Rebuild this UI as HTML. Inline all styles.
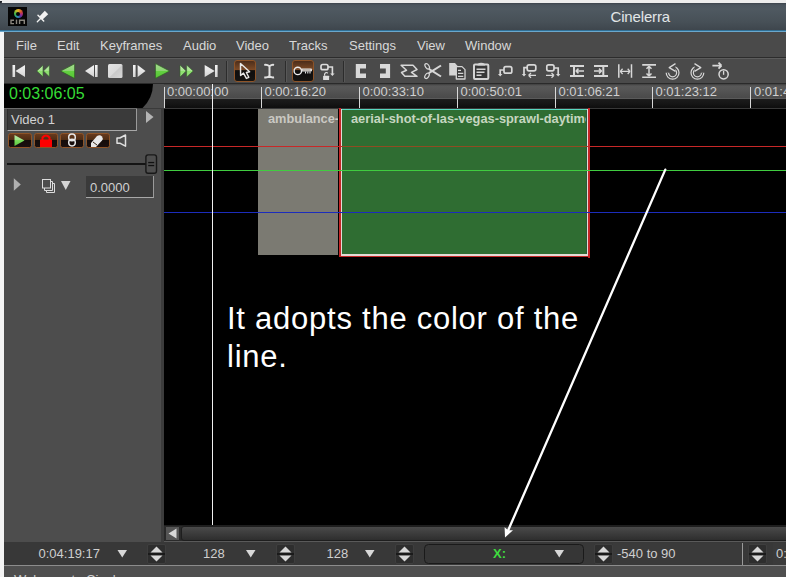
<!DOCTYPE html>
<html><head><meta charset="utf-8">
<style>
*{margin:0;padding:0;box-sizing:border-box}
html,body{width:786px;height:577px;overflow:hidden;background:#4b4b4b;font-family:"Liberation Sans",sans-serif;position:relative}
.a{position:absolute}
.t{position:absolute;white-space:nowrap;line-height:1}
svg{position:absolute;overflow:visible}
</style></head><body>

<!-- top strip & title bar -->
<div class="a" style="left:0;top:0;width:786px;height:3px;background:#ededed"></div>
<div class="a" style="left:0;top:1px;width:2px;height:3px;background:#20242a;border-radius:0 0 2px 0"></div>
<div class="a" style="left:0;top:3px;width:786px;height:27px;background:linear-gradient(#3c444c 0px,#4b555e 2px,#4f5961 6px,#475057 19px,#3e464d 27px)"></div>
<div class="a" style="left:0;top:30px;width:786px;height:1px;background:#2f6f95"></div>
<div class="a" style="left:0;top:31px;width:786px;height:1px;background:#6aa7cc"></div>
<div class="t" style="left:610.5px;top:9.3px;font-size:15px;color:#e2e6e8;letter-spacing:-0.15px">Cinelerra</div>
<!-- app icon -->
<div class="a" style="left:8px;top:7px;width:19px;height:19px;background:#060606"></div>
<div class="a" style="left:13.7px;top:9.2px;width:9px;height:9px;border-radius:50%;background:conic-gradient(from 0deg,#e0a828,#d04a30 60deg,#a02888 110deg,#4a36a8 150deg,#2898b0 200deg,#38b048 260deg,#b8c028 320deg,#e0a828)"></div>
<div class="a" style="left:16.2px;top:11.7px;width:4px;height:4px;border-radius:50%;background:#060606"></div>
<svg style="left:8px;top:7px" width="19" height="19"><g stroke="#8a867e" stroke-width="1.4" fill="none"><path d="M6 13.2 L3 13.2 L3 16.6 L6 16.6"/><path d="M8.5 12.6 L8.5 17"/><path d="M11.6 17 L11.6 13.2 L16.3 13.2 L16.3 17"/></g></svg>
<!-- pin -->
<svg style="left:30px;top:5px" width="25" height="25"><path d="M14.8 5.8 L18.2 9.2 L12.6 14.6 L9.4 11.4Z" fill="#f2f2f2"/><path d="M8 10.3 L13.7 16" stroke="#f2f2f2" stroke-width="1.5" stroke-linecap="round"/><path d="M10.8 13.2 L7.3 16.7" stroke="#f2f2f2" stroke-width="1.3" stroke-linecap="round"/></svg>

<!-- left white strip -->
<div class="a" style="left:0;top:32px;width:4px;height:545px;background:#f4f4f4"></div>

<!-- menu bar -->
<div class="a" style="left:4px;top:32px;width:782px;height:25px;background:#4a4a4a"></div>
<div class="a" style="left:4px;top:57px;width:782px;height:1px;background:#2c2c2c"></div>
<div class="a" style="left:4px;top:58px;width:782px;height:1px;background:#5c5c5c"></div>
<div class="t" style="left:16px;top:38.5px;font-size:13px;color:#d8d8d8">File</div>
<div class="t" style="left:57px;top:38.5px;font-size:13px;color:#d8d8d8">Edit</div>
<div class="t" style="left:100px;top:38.5px;font-size:13px;color:#d8d8d8">Keyframes</div>
<div class="t" style="left:183px;top:38.5px;font-size:13px;color:#d8d8d8">Audio</div>
<div class="t" style="left:236px;top:38.5px;font-size:13px;color:#d8d8d8">Video</div>
<div class="t" style="left:289px;top:38.5px;font-size:13px;color:#d8d8d8">Tracks</div>
<div class="t" style="left:349px;top:38.5px;font-size:13px;color:#d8d8d8">Settings</div>
<div class="t" style="left:417px;top:38.5px;font-size:13px;color:#d8d8d8">View</div>
<div class="t" style="left:465px;top:38.5px;font-size:13px;color:#d8d8d8">Window</div>

<!-- toolbar -->
<div class="a" style="left:4px;top:59px;width:782px;height:24px;background:#4a4a4a"></div>
<div class="a" style="left:4px;top:83px;width:782px;height:1px;background:#2a2a2a"></div>
<svg style="left:0;top:0" width="786" height="84" viewBox="0 0 786 84">
<defs>
<linearGradient id="gw" x1="0" y1="0" x2="0" y2="1"><stop offset="0" stop-color="#f4f4f4"/><stop offset="1" stop-color="#d4d4d4"/></linearGradient>
<linearGradient id="gs" x1="0" y1="0" x2="1" y2="1"><stop offset="0" stop-color="#e4e4e4"/><stop offset="0.5" stop-color="#dadada"/><stop offset="0.55" stop-color="#cacaca"/><stop offset="1" stop-color="#d8d8d8"/></linearGradient>
<linearGradient id="gg" x1="0" y1="0" x2="0" y2="1"><stop offset="0" stop-color="#a4dc8e"/><stop offset="0.48" stop-color="#8cd472"/><stop offset="0.52" stop-color="#62d040"/><stop offset="1" stop-color="#58c436"/></linearGradient>
<linearGradient id="gl" x1="0" y1="0" x2="0" y2="1"><stop offset="0" stop-color="#bceaa8"/><stop offset="0.5" stop-color="#a8e490"/><stop offset="0.52" stop-color="#8ce06c"/><stop offset="1" stop-color="#9ae080"/></linearGradient>
<linearGradient id="gb" x1="0" y1="0" x2="0" y2="1"><stop offset="0" stop-color="#4a2c1a"/><stop offset="0.44" stop-color="#7c4a26"/><stop offset="0.47" stop-color="#1e1610"/><stop offset="0.53" stop-color="#0e0e0e"/><stop offset="1" stop-color="#161412"/></linearGradient>
</defs>
<g fill="url(#gw)">
<rect x="12.5" y="65" width="2.6" height="12"/><path d="M25 65 L15.5 71 L25 77Z"/>
<path d="M94 65 L85 71 L94 77Z"/><rect x="95" y="65" width="2.6" height="12"/>
<rect x="133" y="65" width="2.6" height="12"/><path d="M137.6 65 L145.5 71 L137.6 77Z"/>
<path d="M204.7 65 L214.7 71 L204.7 77Z"/><rect x="215" y="65" width="2.6" height="12"/>
</g>
<rect x="108" y="64" width="14.5" height="14" rx="1.5" fill="url(#gs)"/>
<g fill="url(#gg)" stroke="#2c5a22" stroke-width="0.7" stroke-linejoin="round">
<path d="M74.6 63.8 L60.6 71.1 L74.6 78.5Z"/>
<path d="M155.4 63.6 L169.7 71 L155.4 78.4Z"/>
</g>
<g fill="url(#gl)" stroke="#335f2a" stroke-width="0.6" stroke-linejoin="round">
<path d="M43 65.2 L36.8 71 L43 76.8Z"/><path d="M49.4 65.2 L43.4 71 L49.4 76.8Z"/>
<path d="M180 65 L186.2 71 L180 77Z"/><path d="M186.6 65 L193.2 71 L186.6 77Z"/>
</g>
<!-- separators -->
<g>
<rect x="226" y="61" width="1" height="21" fill="#2c2c2c"/><rect x="227" y="61" width="1" height="21" fill="#585858"/>
<rect x="285" y="61" width="1" height="21" fill="#2c2c2c"/><rect x="286" y="61" width="1" height="21" fill="#585858"/>
<rect x="343" y="61" width="1" height="21" fill="#2c2c2c"/><rect x="344" y="61" width="1" height="21" fill="#585858"/>
</g>
<!-- arrow button -->
<rect x="234.5" y="60.5" width="21" height="21" rx="2.5" fill="url(#gb)" stroke="#8e5428" stroke-width="1"/>
<path d="M240.5 63.5 L240.6 75.5 L243.5 73.1 L246.4 78.4 L248.8 77.3 L246.4 72.5 L249.6 71.8 Z" fill="none" stroke="#e8e8e8" stroke-width="1.45" stroke-linejoin="round"/>
<!-- I-beam -->
<path d="M264.3 65 Q267 64.3 269.5 66.3 Q272 64.3 274 65 M269.5 66.3 L269.5 76 M264.3 77.3 Q267 78 269.5 76 Q272 78 274 77.3" stroke="#e0e0e0" stroke-width="2" fill="none"/>
<!-- key button -->
<rect x="292.5" y="60.5" width="21" height="21" rx="2.5" fill="url(#gb)" stroke="#8e5428" stroke-width="1"/>
<circle cx="297.8" cy="70.9" r="3.7" fill="none" stroke="#ececec" stroke-width="1.4"/>
<rect x="301" y="68.4" width="11" height="3.2" rx="1" fill="#e6e6e6"/><rect x="302.5" y="69.6" width="8" height="0.8" fill="#8a7a6a"/>
<path d="M305.5 71.5 L305.5 73.4 M307.8 71.5 L307.8 73.4 M310 71.5 L310 73.4" stroke="#e6e6e6" stroke-width="1.1"/>
<!-- gang icon -->
<rect x="321" y="64.5" width="7" height="5.2" rx="1.8" fill="none" stroke="#dcdcdc" stroke-width="1.7"/>
<path d="M328 67 L332.4 67 L332.4 74" stroke="#dcdcdc" stroke-width="1.6" fill="none"/><path d="M330.2 73.5 L334.6 73.5 L332.4 76Z" fill="#dcdcdc"/>
<rect x="323.1" y="75.8" width="6" height="4.2" rx="0.5" fill="#dcdcdc"/>
<path d="M324.6 75.8 L324.6 74 Q326 71.5 327.8 73.2" stroke="#dcdcdc" stroke-width="1.2" fill="none"/>
<!-- [ ] -->
<path d="M355.8 64 L366 64 L366 68.5 L360 68.5 L360 73.4 L366 73.4 L366 78 L355.8 78Z" fill="#d8d8d8"/>
<path d="M390.1 64 L380 64 L380 68.5 L385.8 68.5 L385.8 73.4 L380 73.4 L380 78 L390.1 78Z" fill="#d8d8d8"/>
<!-- label -->
<path d="M401.1 65.3 L413 65.3 L417 69.5 L411.5 72.3 L417 76.3 L404.9 76.3 L401.5 72.5 L406.5 70.2 Z" fill="none" stroke="#d8d8d8" stroke-width="1.5" stroke-linejoin="round"/>
<!-- scissors -->
<g stroke="#d8d8d8" fill="none">
<path d="M428.8 68.8 L441 76.5" stroke-width="2"/><path d="M428.8 73.2 L441 65.5" stroke-width="2"/>
<ellipse cx="427.2" cy="66.3" rx="1.8" ry="3" transform="rotate(-35 427.2 66.3)" stroke-width="1.2"/>
<ellipse cx="427" cy="75.8" rx="1.8" ry="3" transform="rotate(35 427 75.8)" stroke-width="1.2"/>
</g>
<!-- copy -->
<path d="M449.2 63 L455 63 L458.5 67 L458.5 75.6 L449.2 75.6Z" fill="#d4d4d4"/>
<path d="M456.3 66.6 L462 66.6 L465 69.6 L465 79 L456.3 79Z" fill="#3c3c3c" stroke="#d4d4d4" stroke-width="1.3" stroke-linejoin="round"/>
<path d="M458 70.3 L461 70.3 M458 73.3 L463.3 73.3 M458 76.3 L463.3 76.3" stroke="#d4d4d4" stroke-width="1.2"/>
<!-- paste -->
<rect x="474" y="64.5" width="14.3" height="14.6" rx="1" fill="#383838" stroke="#d4d4d4" stroke-width="2"/>
<path d="M477.5 65.5 L477.5 64 Q481 61.5 485 64 L485 65.5Z" fill="#d4d4d4"/>
<path d="M476.5 69.3 L485.5 69.3 M476.5 72.3 L484.5 72.3 M476.5 75.3 L481.5 75.3" stroke="#d4d4d4" stroke-width="1.4"/>
<!-- clip icons -->
<g stroke="#d8d8d8" stroke-width="1.7" fill="none">
<rect x="504" y="66.7" width="7.8" height="6.5" rx="1.8"/><path d="M504 70 L500.2 70 L500.2 74.5"/>
<rect x="527.2" y="64.8" width="8.6" height="6" rx="1.8"/><path d="M527.2 67.6 L524 67.6 L524 74.3"/>
<rect x="546.8" y="64.8" width="7.2" height="6" rx="1.8"/><path d="M554 68 L558.2 68 L558.2 74.3"/>
</g>
<g fill="#d8d8d8">
<path d="M498 74 L502.4 74 L500.2 76.5Z"/>
<path d="M521.8 74 L526.2 74 L524 76.5Z"/>
<path d="M556 74 L560.4 74 L558.2 76.5Z"/>
</g>
<g stroke="#d8d8d8" stroke-width="1.3" fill="none">
<path d="M528.5 75.4 L536 75.4 M528.5 75.4 L531 73 M528.5 75.4 L531 77.8"/>
<path d="M546 75.4 L554 75.4 M554 75.4 L551.5 73 M554 75.4 L551.5 77.8"/>
</g>
<!-- trim icons -->
<g stroke="#d8d8d8" fill="none">
<path d="M570 66 L584 66 M570 75.9 L584 75.9" stroke-width="2"/><path d="M574 65 L574 77" stroke-width="2"/><path d="M575.5 71 L584 71 M576 71 L578.5 68.6 M576 71 L578.5 73.4" stroke-width="1.5"/>
<path d="M594 66 L608 66 M594 75.9 L608 75.9" stroke-width="2"/><path d="M603.3 65 L603.3 77" stroke-width="2"/><path d="M594 71 L602 71 M601.5 71 L599 68.6 M601.5 71 L599 73.4" stroke-width="1.5"/>
<path d="M618.8 64.2 L618.8 77.8 M631.5 64.2 L631.5 77.8" stroke-width="1.5"/><path d="M620 71.4 L630.3 71.4 M620.3 71.4 L622.6 68.8 M620.3 71.4 L622.6 74 M630 71.4 L627.7 68.8 M630 71.4 L627.7 74" stroke-width="1.3"/>
<path d="M642.2 64.9 L656 64.9 M642.2 77.3 L656 77.3" stroke-width="1.6"/><path d="M649 66 L649 76.2 M649 66.3 L646.5 68.8 M649 66.3 L651.5 68.8 M649 76 L646.5 73.5 M649 76 L651.5 73.5" stroke-width="1.5"/>
</g>
<!-- undo / redo (outlined thick arcs) -->
<g fill="none" stroke-linecap="butt">
<path d="M672.6 67.6 A5.2 5.2 0 1 1 667.4 72.8" stroke="#d8d8d8" stroke-width="3.6"/>
<path d="M672.6 67.6 A5.2 5.2 0 1 1 667.4 72.8" stroke="#4a4a4a" stroke-width="1.2"/>
<path d="M697.4 67.6 A5.2 5.2 0 1 0 702.6 72.8" stroke="#d8d8d8" stroke-width="3.6"/>
<path d="M697.4 67.6 A5.2 5.2 0 1 0 702.6 72.8" stroke="#4a4a4a" stroke-width="1.2"/>
</g>
<path d="M675.5 63.6 L669.2 67.6 L675.5 71.4" fill="#4a4a4a" stroke="#d8d8d8" stroke-width="1.3" stroke-linejoin="round"/>
<path d="M694.5 63.6 L700.8 67.6 L694.5 71.4" fill="#4a4a4a" stroke="#d8d8d8" stroke-width="1.3" stroke-linejoin="round"/>
<!-- goto -->
<g stroke="#d8d8d8" fill="none">
<path d="M712.4 65.7 L721.5 65.7 M721.5 65.7 L718.5 62.7 M721.5 65.7 L718.5 68.7" stroke-width="1.8"/>
<circle cx="723.6" cy="74.3" r="4.6" stroke-width="1.5"/><path d="M723.6 70.8 L723.6 74.8" stroke-width="1.3"/>
</g>
</svg>


<!-- timecode / ruler -->
<div class="a" style="left:4px;top:84px;width:160px;height:24px;background:#4e4e4e"></div>
<svg style="left:0;top:0" width="170" height="110"><path d="M4 84 L153 84 A34 34 0 0 1 142.6 108 L4 108Z" fill="#000"/></svg>
<div class="t" style="left:9px;top:86px;font-size:16px;color:#36dc36">0:03:06:05</div>
<div class="a" style="left:164px;top:84px;width:622px;height:15px;background:linear-gradient(#3e3e3e 0px,#585858 2px,#555 6px,#4a4a4a 14px,#3c3c3c 15px)"></div>
<div class="a" style="left:164px;top:99px;width:622px;height:9px;background:linear-gradient(#1c1c1c,#161616 50%,#0e0e0e)"></div>
<div class="a" style="left:164px;top:98px;width:622px;height:1px;background:#5a5a5a"></div>
<div class="a" style="left:164px;top:87px;width:1px;height:21px;background:#d8d8d8"></div>
<div class="t" style="left:167px;top:85.3px;font-size:13px;color:#cfcfcf">0:00:00:00</div>
<div class="a" style="left:261px;top:87px;width:1px;height:21px;background:#d8d8d8"></div>
<div class="t" style="left:264.5px;top:85.3px;font-size:13px;color:#cfcfcf">0:00:16:20</div>
<div class="a" style="left:359px;top:87px;width:1px;height:21px;background:#d8d8d8"></div>
<div class="t" style="left:362.5px;top:85.3px;font-size:13px;color:#cfcfcf">0:00:33:10</div>
<div class="a" style="left:457px;top:87px;width:1px;height:21px;background:#d8d8d8"></div>
<div class="t" style="left:460.5px;top:85.3px;font-size:13px;color:#cfcfcf">0:00:50:01</div>
<div class="a" style="left:555px;top:87px;width:1px;height:21px;background:#d8d8d8"></div>
<div class="t" style="left:558.5px;top:85.3px;font-size:13px;color:#cfcfcf">0:01:06:21</div>
<div class="a" style="left:652px;top:87px;width:1px;height:21px;background:#d8d8d8"></div>
<div class="t" style="left:655.5px;top:85.3px;font-size:13px;color:#cfcfcf">0:01:23:12</div>
<div class="a" style="left:750px;top:87px;width:1px;height:21px;background:#d8d8d8"></div>
<div class="t" style="left:754px;top:85.3px;font-size:13px;color:#cfcfcf">0:01:40:03</div>

<!-- left panel -->
<div class="a" style="left:4px;top:108px;width:157px;height:434px;background:#4d4d4d"></div>
<div class="a" style="left:161px;top:108px;width:3px;height:434px;background:#3c3c3c"></div>
<!-- Video 1 textbox -->
<div class="a" style="left:4px;top:108px;width:157px;height:1px;background:#3a3a3a"></div>
<div class="a" style="left:4px;top:108px;width:133px;height:1px;background:#6c6c6c"></div>
<div class="a" style="left:7px;top:109px;width:130px;height:22px;background:#3a3a3a;border-left:1px solid #2e2e2e;border-right:1px solid #9a9a9a;border-bottom:1px solid #a8a8a8"></div>
<div class="t" style="left:11px;top:113px;font-size:13px;color:#d2d2d2">Video 1</div>
<svg style="left:0;top:0" width="170" height="200">
<defs>
<linearGradient id="pb" x1="0" y1="0" x2="0" y2="1"><stop offset="0" stop-color="#6a3c1e"/><stop offset="0.45" stop-color="#4e2c14"/><stop offset="0.47" stop-color="#140c0a"/><stop offset="1" stop-color="#1a1010"/></linearGradient>
<linearGradient id="pg" x1="0" y1="0" x2="0" y2="1"><stop offset="0" stop-color="#b4e8a4"/><stop offset="0.45" stop-color="#a0e488"/><stop offset="0.5" stop-color="#78dc58"/><stop offset="1" stop-color="#5cc444"/></linearGradient>
</defs>
<path d="M146 111 L153.5 117 L146 123Z" fill="#b4b4b4"/>
<g fill="url(#pb)" stroke="#8e5428" stroke-width="1">
<rect x="8.5" y="133.5" width="23" height="14" rx="2"/>
<rect x="34.5" y="133.5" width="23" height="14" rx="2"/>
<rect x="60.5" y="133.5" width="23" height="14" rx="2"/>
<rect x="86.5" y="133.5" width="23" height="14" rx="2"/>
</g>
<path d="M14.5 135 L24.5 140.5 L14.5 146Z" fill="url(#pg)"/>
<rect x="40" y="139.5" width="12" height="7.5" fill="#ff0000"/>
<path d="M42.5 140 L42.5 137.5 Q46 133.5 49.5 137.5 L49.5 140" stroke="#ff0000" stroke-width="2" fill="none"/>
<g stroke="#e8e8e8" stroke-width="1.5" fill="none"><circle cx="72" cy="137.4" r="3.3"/><circle cx="72" cy="142.6" r="3.3"/></g>
<path d="M91 143 L97 136 Q100 134.5 102 136.5 Q103.5 138.5 102 140.5 L96 147 L91 147Z" fill="#e8e8e8"/>
<path d="M93 142 L97 145" stroke="#3a2a1a" stroke-width="1"/>
<path d="M117 138 L119.8 138 L125.5 135 L125.5 146.2 L119.8 143.2 L117 143.2Z" fill="none" stroke="#e0e0e0" stroke-width="1.5" stroke-linejoin="round"/>
<!-- slider -->
<rect x="7" y="163" width="140" height="2" fill="#141414"/>
<rect x="145.9" y="154.9" width="10.6" height="18.4" rx="2.2" fill="#4e4e4e" stroke="#181818" stroke-width="1.4"/>
<rect x="148.2" y="161.9" width="6" height="1.3" fill="#111"/><rect x="148.2" y="164.9" width="6" height="1.3" fill="#111"/>
<!-- expand, overlay, down -->
<path d="M13.8 178.3 L20.8 184.5 L13.8 190.8Z" fill="#b0b0b0"/>
<g fill="none" stroke="#dcdcdc" stroke-width="1">
<rect x="42.5" y="179.5" width="8" height="8.5"/>
<path d="M50.5 181.5 L52.5 181.5 L52.5 190.5 L44.5 190.5 L44.5 188"/>
<path d="M52.5 183.5 L54.5 183.5 L54.5 192.5 L46.5 192.5 L46.5 190.5"/>
</g>
<path d="M61 181 L70.5 181 L65.75 190Z" fill="#d4d4d4"/>
</svg>
<div class="a" style="left:86px;top:176px;width:68px;height:22px;background:#3a3a3a;border-right:1px solid #9a9a9a;border-bottom:1px solid #a8a8a8"></div>
<div class="t" style="left:90px;top:181px;font-size:13px;color:#d0d0d0">0.0000</div>


<!-- canvas -->
<div class="a" style="left:164px;top:108px;width:622px;height:417px;background:#000"></div>
<!-- clips -->
<div class="a" style="left:164px;top:108px;width:622px;height:1px;background:#383838"></div>
<div class="a" style="left:258px;top:109px;width:80px;height:146px;background:#7b7a72"></div>
<div class="a" style="left:338.5px;top:108px;width:2px;height:149px;background:#c42626"></div>
<div class="a" style="left:588px;top:108px;width:1.8px;height:149.5px;background:#c42626"></div>
<div class="a" style="left:338.5px;top:256px;width:251.3px;height:1.3px;background:#c42626"></div>
<div class="a" style="left:341px;top:109px;width:247px;height:147px;background:#e2dcd6"></div>
<div class="a" style="left:342px;top:109px;width:245px;height:145px;background:#2f6d32;border-top:1px solid #5ad8c0"></div>
<div class="a" style="left:586px;top:110px;width:1px;height:144px;background:#2a5a3a"></div>
<div class="a" style="left:258px;top:109px;width:80px;height:20px;overflow:hidden"><div class="t" style="left:10px;top:4px;font-size:12.8px;font-weight:bold;color:#cac8c2">ambulance-</div></div>
<div class="a" style="left:342px;top:109px;width:244px;height:20px;overflow:hidden"><div class="t" style="left:9px;top:4px;font-size:12.8px;font-weight:bold;color:#c6d6c0">aerial-shot-of-las-vegas-sprawl-daytime</div></div>
<!-- lines -->
<div class="a" style="left:164px;top:146.2px;width:622px;height:1.3px;background:#c82828"></div>
<div class="a" style="left:342px;top:146.2px;width:245px;height:1.3px;background:#904c22"></div>
<div class="a" style="left:164px;top:170.2px;width:622px;height:1.3px;background:#40cc40"></div>
<div class="a" style="left:164px;top:212.2px;width:622px;height:1.3px;background:#1c2cbc"></div>
<!-- cursor -->
<div class="a" style="left:212px;top:84px;width:1px;height:441px;background:#f0f0f0"></div>
<!-- annotation -->
<div class="t" style="left:227px;top:300px;font-size:31px;color:#fff;line-height:37.5px;letter-spacing:0.75px">It adopts the color of the<br>line.</div>


<!-- scrollbar -->
<div class="a" style="left:164px;top:525px;width:622px;height:17px;background:#2a2a2a"></div>
<div class="a" style="left:164px;top:525px;width:622px;height:1px;background:#1e1e1e"></div>
<div class="a" style="left:165px;top:526px;width:15px;height:15px;background:#555;border:1px solid #2a2a2a;border-radius:1px"></div>
<svg style="left:0;top:0" width="786" height="577"><path d="M176.5 528.5 L168.5 533.5 L176.5 538.5Z" fill="#d8d8d8"/></svg>
<div class="a" style="left:181px;top:526px;width:610px;height:15px;background:linear-gradient(#4a4a4a,#2e2e2e);border:1px solid #1e1e1e;border-radius:3px"></div>
<div class="a" style="left:164px;top:541px;width:622px;height:1px;background:#5a5a5a"></div>


<!-- status bar -->
<div class="a" style="left:4px;top:542px;width:782px;height:23px;background:#383838"></div>
<div class="a" style="left:4px;top:565px;width:782px;height:1px;background:#8c8c8c"></div>
<div class="a" style="left:4px;top:566px;width:782px;height:11px;background:#4f4f4f"></div>
<div class="t" style="left:38.5px;top:546.5px;font-size:13px;color:#cfcfcf">0:04:19:17</div>
<div class="t" style="left:203px;top:546.5px;font-size:13px;color:#cfcfcf">128</div>
<div class="t" style="left:326.5px;top:546.5px;font-size:13px;color:#cfcfcf">128</div>
<svg style="left:0;top:0" width="786" height="577">
<rect x="424.5" y="544.5" width="159" height="19" rx="4" fill="#363636" stroke="#1a1a1a"/>
<g fill="#d8d8d8">
<path d="M117.5 550 L127 550 L122.25 557.5Z"/>
<path d="M246 550 L255.5 550 L250.75 557.5Z"/>
<path d="M365 550 L374.5 550 L369.75 557.5Z"/>
<path d="M554.5 550 L564 550 L559.25 557.5Z"/>
</g>
<g>
<rect x="147.5" y="544.5" width="18" height="19" rx="1.5" fill="#2e2e2e" stroke="#4a4a4a" stroke-opacity="0.5"/>
<rect x="276.5" y="544.5" width="18" height="19" rx="1.5" fill="#2e2e2e" stroke="#4a4a4a" stroke-opacity="0.5"/>
<rect x="395.5" y="544.5" width="18" height="19" rx="1.5" fill="#2e2e2e" stroke="#4a4a4a" stroke-opacity="0.5"/>
<rect x="594.5" y="544.5" width="18" height="19" rx="1.5" fill="#2e2e2e" stroke="#4a4a4a" stroke-opacity="0.5"/>
<rect x="748.5" y="544.5" width="18" height="19" rx="1.5" fill="#2e2e2e" stroke="#4a4a4a" stroke-opacity="0.5"/>
</g>
<g fill="#161616"><rect x="148" y="553.2" width="17" height="1.6"/><rect x="277" y="553.2" width="17" height="1.6"/><rect x="396" y="553.2" width="17" height="1.6"/><rect x="595" y="553.2" width="17" height="1.6"/><rect x="749" y="553.2" width="17" height="1.6"/></g>
<g fill="#d8d8d8">
<path d="M150.5 552.5 L156.5 546.5 L162.5 552.5Z"/><path d="M150.5 555.5 L162.5 555.5 L156.5 561.5Z"/>
<path d="M279.5 552.5 L285.5 546.5 L291.5 552.5Z"/><path d="M279.5 555.5 L291.5 555.5 L285.5 561.5Z"/>
<path d="M398.5 552.5 L404.5 546.5 L410.5 552.5Z"/><path d="M398.5 555.5 L410.5 555.5 L404.5 561.5Z"/>
<path d="M597.5 552.5 L603.5 546.5 L609.5 552.5Z"/><path d="M597.5 555.5 L609.5 555.5 L603.5 561.5Z"/>
<path d="M751.5 552.5 L757.5 546.5 L763.5 552.5Z"/><path d="M751.5 555.5 L763.5 555.5 L757.5 561.5Z"/>
</g>
</svg>
<div class="t" style="left:493px;top:547px;font-size:13px;font-weight:bold;color:#3fdc3f">X:</div>
<div class="a" style="left:613px;top:543px;width:130px;height:22px;background:#3a3a3a;border-right:1px solid #9a9a9a"></div>
<div class="t" style="left:617px;top:546.5px;font-size:13px;color:#cfcfcf">-540 to 90</div>
<div class="a" style="left:773px;top:543px;width:13px;height:22px;background:#3a3a3a"></div>
<div class="t" style="left:776px;top:546.5px;font-size:13px;color:#cfcfcf">0:</div>
<div class="t" style="left:14px;top:572.5px;font-size:13px;color:#d0d0d0">Welcome to Cinelerra</div>


<svg style="left:0;top:0" width="786" height="577">
<path d="M665.3 169.6 L507 533" stroke="#fff" stroke-width="2.3" stroke-linecap="round"/>
<path d="M505 537.5 L504.6 527.3 L508.2 530.2 L513 530.3Z" fill="#fff"/>
</svg>
</body></html>
